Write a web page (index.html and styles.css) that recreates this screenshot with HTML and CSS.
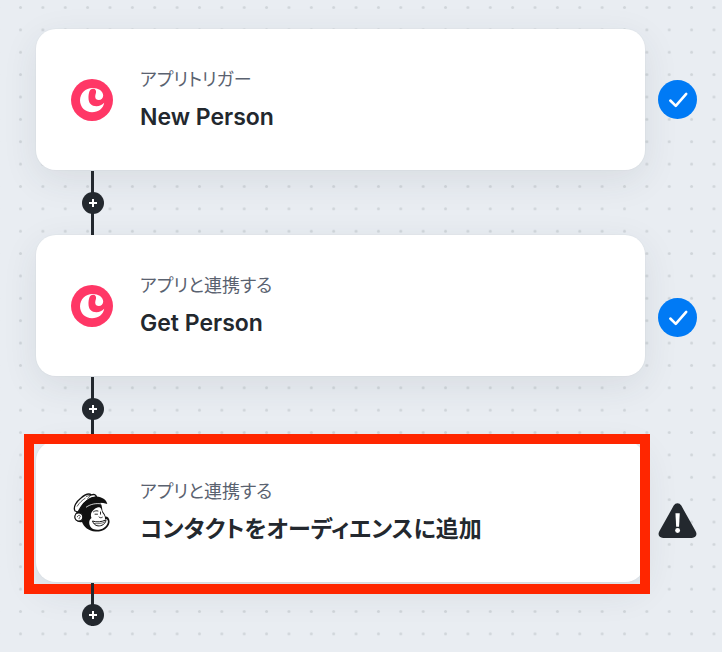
FILE: index.html
```html
<!DOCTYPE html>
<html lang="ja">
<head>
<meta charset="utf-8">
<meta name="viewport" content="width=device-width, initial-scale=1">
<title>ワークフロー</title>
<link rel="stylesheet" href="styles.css">
</head>
<body>
<svg class="grid" aria-hidden="true">
  <defs>
    <pattern id="dots" x="9.3" y="-3.7" width="22.37" height="22.37" patternUnits="userSpaceOnUse">
      <circle cx="11.2" cy="11.2" r="1.5" fill="#d0d5da"/>
    </pattern>
    <symbol id="brand" viewBox="0 0 42 42">
      <circle cx="21" cy="21" r="21" fill="#ff3766"/>
      <path d="M21.500 9C14.500 9 9 14.300 9 21.300C9 28.400 14.300 33.300 21 33.300C27.300 33.300 32.300 29.500 33.200 23.800C31 26 28.500 27.200 25.500 27.200C20.500 27.200 17.500 24.300 17.500 19C17.500 14 18.500 9.700 22 9.700C24.600 9.700 25.300 11.500 25 13.500C24.800 15 24.200 16.200 24.200 17.800C24.200 19.900 25.900 21 27.800 21C30.300 21 32.200 19.200 32.200 16.500C32.200 12 27.500 9 21.500 9Z" fill="#fff"/>
    </symbol>
    <symbol id="check" viewBox="0 0 38 38">
      <circle cx="19" cy="19" r="19" fill="#007af5"/>
      <path d="M12 20L17.300 25.200L27.500 13.500" fill="none" stroke="#fff" stroke-width="2.500" stroke-linecap="round" stroke-linejoin="round"/>
    </symbol>
    <symbol id="plus" viewBox="0 0 22 22">
      <path d="M11 7V15M7 11H15" fill="none" stroke="#fff" stroke-width="2"/>
    </symbol>
  </defs>
  <rect width="100%" height="100%" fill="url(#dots)"/>
</svg>
<main class="flow">
  <section class="step">
    <article class="card">
      <svg class="logo" aria-hidden="true"><use href="#brand"/></svg>
      <div class="text">
        <p class="kind">アプリトリガー</p>
        <h2 class="name">New Person</h2>
      </div>
    </article>
    <svg class="status" role="img" aria-label="完了"><use href="#check"/></svg>
  </section>
  <div class="connector">
    <button class="add" type="button" aria-label="ステップを追加"><svg aria-hidden="true"><use href="#plus"/></svg></button>
  </div>
  <section class="step">
    <article class="card">
      <svg class="logo" aria-hidden="true"><use href="#brand"/></svg>
      <div class="text">
        <p class="kind">アプリと連携する</p>
        <h2 class="name">Get Person</h2>
      </div>
    </article>
    <svg class="status status-low" role="img" aria-label="完了"><use href="#check"/></svg>
  </section>
  <div class="connector">
    <button class="add" type="button" aria-label="ステップを追加"><svg aria-hidden="true"><use href="#plus"/></svg></button>
  </div>
  <section class="step step-marked">
    <article class="card">
      <svg class="logo" viewBox="0 0 42 42" aria-hidden="true">
        <path d="M8 17C10 12 14 9 18 8L28 9C31 13 31 17 31.500 20C32.500 22 34 23 34.500 25.500C37 25.500 39 28 38.500 31.500C37.500 37.500 31 41 24.500 40.500C17.500 40 12.800 36 11 31C7 32 3.800 29.500 3.800 26C3.800 23 5 21 7 20Z" fill="#111"/>
        <path d="M23 18.500C20.500 20.500 19 23.500 20.500 27C17 29.500 17.500 35.500 22 38C28 40.500 35.500 37 36.800 31.500C37.300 29 36 27.500 34 28C34.300 25 32.500 23 31.300 21.500C30.600 19 30.300 17.200 28.500 16.300C26.500 15.800 25 16.800 23 18.500Z" fill="#fff"/>
        <path d="M4 20C1.800 16 5.500 10.500 10 7C14 3.500 18 2 20.500 4C22.500 3 25 3.500 25.500 6C19 7.500 13 11 10 16L7 21Z" fill="#fff" stroke="#111" stroke-width="1.300" stroke-linejoin="round"/>
        <path d="M12 14C14.500 8.500 20 5.500 25.500 5.500C31 6 35.500 8.500 36.300 13C29 10.500 21 11.500 15 15.500L11 22Z" fill="#111"/>
        <path d="M15 16.300C20 12.800 25.500 12 31 13" fill="none" stroke="#fff" stroke-width=".8"/>
        <path d="M15 5.500L20 4L16.500 7.800M6 15.500C8.500 11.500 11.500 9 14.500 7" fill="none" stroke="#111" stroke-width=".7"/>
        <circle cx="7.800" cy="26" r="4" fill="#fff" stroke="#111" stroke-width="1.200"/>
        <path d="M6.300 26.200C6.500 24 9.300 23.700 9.300 25.400C9.300 26.700 7.800 26.200 8.100 28.200" fill="none" stroke="#111" stroke-width=".7"/>
        <path d="M22.500 20.800C24 19.700 25.500 19.500 27 20M24 23.200H26.500M29.500 21V23.200M28 26C29 27 30.300 27 31.300 26.300" fill="none" stroke="#111" stroke-width=".9" stroke-linecap="round"/>
        <path d="M21.500 30C25.500 31.500 31 31 35 28.800C34.800 33 30.500 35.200 27 34.900C24.300 34.700 22.300 32.500 21.500 30Z" fill="#fff" stroke="#111" stroke-width="1"/>
        <path d="M23 32.500C27 33.100 31 32.500 34 30.800" fill="none" stroke="#111" stroke-width=".6"/>
      </svg>
      <div class="text">
        <p class="kind">アプリと連携する</p>
        <h2 class="name">コンタクトをオーディエンスに追加</h2>
      </div>
    </article>
    <svg class="status status-warn" viewBox="0 0 38 38" role="img" aria-label="警告">
      <path d="M15.300 4.500C17 1.300 21 1.300 22.700 4.500L36.700 29.500C38.700 33.200 36.600 36 33 36H5C1.400 36-.7 33.200 1.300 29.500Z" fill="#23282e"/>
      <path d="M17 12H21.200L20.500 25H17.700Z" fill="#fff"/>
      <circle cx="19.100" cy="28.800" r="2.400" fill="#fff"/>
    </svg>
  </section>
  <div class="connector connector-end">
    <button class="add" type="button" aria-label="ステップを追加"><svg aria-hidden="true"><use href="#plus"/></svg></button>
  </div>
</main>
</body>
</html>
```
FILE: styles.css
```css
* {
  box-sizing: border-box;
}

body {
  position: relative;
  margin: 0;
  min-height: 100vh;
  background: #e9edf2;
  color: #23282e;
  font-family: Inter, "Noto Sans CJK JP", sans-serif;
}

.grid {
  position: absolute;
  inset: 0;
  width: 100%;
  height: 100%;
}

.flow {
  position: relative;
  padding: 29px 25px 26px 36px;
}

.step {
  position: relative;
  display: flex;
  align-items: center;
  gap: 13px;
}

.card {
  flex: 1;
  min-width: 0;
  min-height: 141px;
  display: flex;
  align-items: center;
  gap: 27px;
  padding: 34px 35px 31px;
  border-radius: 20px;
  background: #fff;
  box-shadow: 0 0 1px 1px rgba(40, 50, 60, 0.02), 0 10px 36px rgba(40, 60, 65, 0.09);
}

.logo {
  flex: none;
  width: 42px;
  height: 42px;
  margin-bottom: 2px;
}

.text {
  min-width: 0;
}

.kind,
.name {
  margin: 0;
  font-feature-settings: "palt";
}

.kind {
  color: #5a6270;
  font-size: 18px;
  line-height: 32px;
}

.name {
  font-size: 23px;
  font-weight: 600;
  line-height: 42px;
}

.status {
  flex: none;
  width: 39px;
  height: 39px;
}

.status-low {
  margin-top: 24px;
}

.status-warn {
  margin-top: 18px;
}

.step-marked::after {
  content: "";
  position: absolute;
  inset: -7px 47px -12px -12px;
  border: 10px solid #ff2600;
  pointer-events: none;
}

.connector {
  position: relative;
  width: 114px;
  height: 65px;
  padding-top: 22px;
}

.connector::before {
  content: "";
  position: absolute;
  top: 1px;
  bottom: 0;
  left: 55px;
  width: 3px;
  background: #23282e;
}

.connector-end {
  height: 44px;
}

.add {
  position: relative;
  display: block;
  width: 22px;
  height: 22px;
  margin: 0 auto;
  padding: 0;
  border: 0;
  border-radius: 50%;
  background: #23282e;
}

.add svg {
  display: block;
  width: 22px;
  height: 22px;
}
```
